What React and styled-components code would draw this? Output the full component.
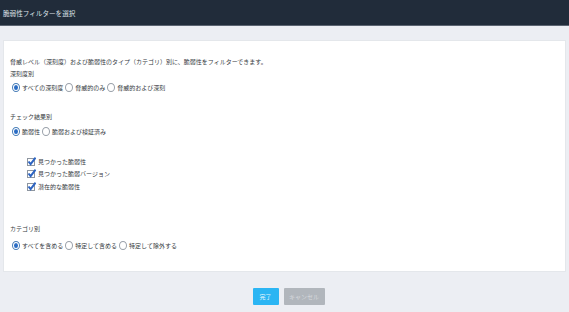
import React from "react";
import styled, { createGlobalStyle } from "styled-components";

const GlobalStyle = createGlobalStyle`
  html, body {
    margin: 0;
    padding: 0;
    background: #eceef3;
  }
  body {
    font-family: "Noto Sans CJK JP", "Noto Sans", sans-serif;
    color: #353a41;
  }
`;

const Page = styled.div`
  width: 569px;
  height: 312px;
  overflow: hidden;
`;

const Header = styled.div`
  height: 25px;
  background: #212c3a;
  border-bottom: 1px solid #5b6471;
  display: flex;
  align-items: center;
  padding-left: 3px;
  color: #dde2e8;
  font-size: 6.6px;
`;

const Body = styled.div`
  padding: 14px 3px 0 3px;
`;

const Panel = styled.div`
  height: 232px;
  box-sizing: border-box;
  background: #ffffff;
  border: 1px solid #e4e7eb;
  padding: 16px 6px 0 6px;
  font-size: 6px;
`;

const Line = styled.div`
  line-height: 10px;
  height: 10px;
  margin-top: ${(p) => p.$top || 0}px;
  white-space: nowrap;
`;

const Row = styled.div`
  display: flex;
  align-items: center;
  height: 10px;
  margin-top: ${(p) => p.$top || 0}px;
  white-space: nowrap;
`;

const Option = styled.label`
  display: flex;
  align-items: center;
  gap: 2px;
`;

const RadioMark = styled.span`
  width: 6px;
  height: 7px;
  border-radius: 50%;
  border: 1px solid ${(p) => (p.$on ? "#4a7fb8" : "#9aa1aa")};
  background: #fff;
  display: flex;
  align-items: center;
  justify-content: center;
  margin-left: 2px;

  &::after {
    content: "";
    width: 4px;
    height: 5px;
    border-radius: 50%;
    background: ${(p) => (p.$on ? "#2a6cc4" : "transparent")};
  }
`;

const CheckGroup = styled.div`
  margin-top: 19px;
  display: flex;
  flex-direction: column;
`;

const CheckRow = styled.div`
  display: flex;
  align-items: center;
  gap: 2px;
  height: 12.5px;
  padding-left: 17px;
  white-space: nowrap;
`;

const CheckBox = () => (
  <svg width="9" height="9" viewBox="0 0 9 9">
    <rect x="0.5" y="1.5" width="7" height="7" fill="#fff" stroke="#8e96a0" />
    <path d="M1.5 4.5 L3.6 7.2 L8.6 0.6" fill="none" stroke="#2d64c2" strokeWidth="2" />
  </svg>
);

const Footer = styled.div`
  display: flex;
  justify-content: center;
  gap: 5px;
  margin-top: 16px;
  padding-left: 8px;
`;

const Button = styled.button`
  height: 17px;
  padding: 0;
  width: ${(p) => p.$w}px;
  border: none;
  border-radius: 1px;
  font-family: inherit;
  font-size: 6px;
  background: ${(p) => (p.$primary ? "#2bb5f3" : "#b1b6bc")};
  color: ${(p) => (p.$primary ? "#e8f6fd" : "#d6d9dd")};
`;

const Radio = ({ on, children }) => (
  <Option>
    <RadioMark $on={on} />
    {children}
  </Option>
);

export default function App() {
  return (
    <Page>
      <GlobalStyle />
      <Header>脆弱性フィルターを選択</Header>
      <Body>
        <Panel>
          <Line>
            脅威レベル（深刻度）および脆弱性のタイプ（カテゴリ）別に、脆弱性をフィルターできます。
          </Line>
          <Line $top={2}>深刻度別</Line>
          <Row $top={3}>
            <Radio on>すべての深刻度</Radio>
            <Radio>脅威的のみ</Radio>
            <Radio>脅威的および深刻</Radio>
          </Row>
          <Line $top={20}>チェック結果別</Line>
          <Row $top={4}>
            <Radio on>脆弱性</Radio>
            <Radio>脆弱および検証済み</Radio>
          </Row>
          <CheckGroup>
            <CheckRow>
              <CheckBox />
              見つかった脆弱性
            </CheckRow>
            <CheckRow>
              <CheckBox />
              見つかった脆弱バージョン
            </CheckRow>
            <CheckRow>
              <CheckBox />
              潜在的な脆弱性
            </CheckRow>
          </CheckGroup>
          <Line $top={31}>カテゴリ別</Line>
          <Row $top={7}>
            <Radio on>すべてを含める</Radio>
            <Radio>特定して含める</Radio>
            <Radio>特定して除外する</Radio>
          </Row>
        </Panel>
        <Footer>
          <Button $primary $w={26}>完了</Button>
          <Button $w={41}>キャンセル</Button>
        </Footer>
      </Body>
    </Page>
  );
}
